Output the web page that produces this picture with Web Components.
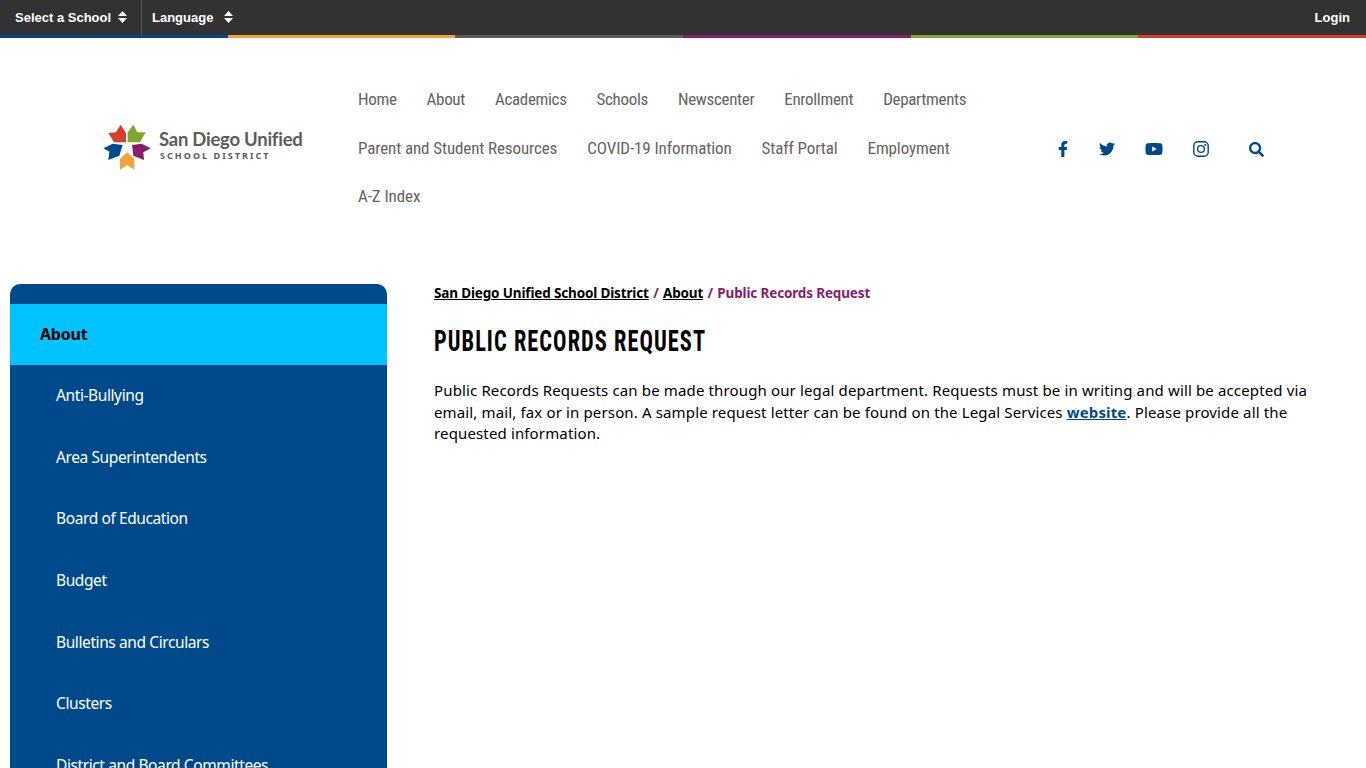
<!DOCTYPE html>
<html lang="en"><head><meta charset="utf-8"><title>Public Records Request</title>
<style>
html,body{margin:0;padding:0;height:768px;overflow:hidden;background:#fff}
body{font-family:"Noto Sans","Open Sans",sans-serif}
</style></head><body>
<sd-topbar></sd-topbar>
<sd-header></sd-header>
<sd-layout>
  <sd-sidenav slot="side"></sd-sidenav>
  <sd-article slot="main"></sd-article>
</sd-layout>
<script>
function def(name,html){
  customElements.define(name,class extends HTMLElement{
    constructor(){super();this.attachShadow({mode:'open'}).innerHTML=html;}
  });
}
const sort='<svg width="9" height="12" viewBox="0 0 9 12"><path fill="#fff" d="M4.5 0 9 5H0zM4.5 12 0 7h9z"/></svg>';
def('sd-topbar',`<style>
:host{display:block;font:700 13px/1 "Liberation Sans",Arial,sans-serif;color:#fff}
.bar{height:35px;background:#323232;display:flex;align-items:center;box-sizing:border-box}
.cell{height:35px;padding-bottom:1px;display:flex;align-items:center;box-sizing:border-box}
.school{width:142px;padding-left:15px;gap:7px;border-right:1px solid #555}
.lang{padding-left:10px;gap:11px}
.login{margin-left:auto;padding-right:16px}
span{display:block}
svg{display:block}
.stripe{display:grid;grid-template-columns:repeat(6,1fr);height:3px}
.stripe i{display:block}
</style>
<div class="bar">
<div class="cell school"><span>Select a School</span>${sort}</div>
<div class="cell lang"><span>Language</span>${sort}</div>
<div class="cell login"><span>Login</span></div>
</div>
<div class="stripe"><i style="background:#004a8b"></i><i style="background:#f5a13c"></i><i style="background:#5d5a58"></i><i style="background:#8a1c70"></i><i style="background:#7fa832"></i><i style="background:#d6402a"></i></div>`);

const navRows=[["Home","About","Academics","Schools","Newscenter","Enrollment","Departments"],["Parent and Student Resources","COVID-19 Information","Staff Portal","Employment"],["A-Z Index"]];
def('sd-header',`<style>
:host{display:block}
.wrap{height:246px;display:flex;align-items:center;box-sizing:border-box;padding-bottom:24px}
.logo{width:358px;box-sizing:border-box;padding-left:102px;display:flex;align-items:center;gap:7px;margin-top:-4px}
.logo svg{display:block;flex:none}
.lt{display:flex;flex-direction:column;color:#625a57;white-space:nowrap;margin-top:-6px}
.l1{font:700 18.5px/22px Lato,"Noto Sans",sans-serif;letter-spacing:-.25px}
.l2{font:700 9px/11px "Noto Sans",sans-serif;letter-spacing:2.05px;margin-left:1px}
nav{width:690px;font:400 17px/48.5px "Liberation Sans Narrow","Roboto Condensed","Roboto",sans-serif;color:#6a625e;letter-spacing:-.1px;margin-top:-2.5px}
.row{display:flex;gap:30px;white-space:nowrap}
.row:first-child{letter-spacing:-.32px}
.icons{display:flex;align-items:center;margin-top:-1px;height:20px;position:relative;flex:1}
.icons svg{display:block;fill:#004a8b}
.f{margin-left:10px}.t{margin-left:31px}.y{margin-left:30px}.i{margin-left:30px}.s{margin-left:40px;margin-top:2px}
</style>
<div class="wrap">
<div class="logo">
<svg width="50" height="48" viewBox="36 42 150 144" aria-hidden="true">
<path fill="#d6402a" d="M55 72l23-2 14-23 16 25v28H72z"/>
<path fill="#7fa832" d="M113 100V70l17-23 12 23h25l-17 30z"/>
<path fill="#004a8b" d="M40 118l28-14 30 4-10 32-33 13 3-25z"/>
<path fill="#8a1c70" d="M126 108l29-4 27 14-22 12 2 23-32-13z"/>
<path fill="#f5a13c" d="M90 150l22-20 21 20v32l-21-14-22 14z"/>
</svg>
<div class="lt"><span class="l1">San Diego Unified</span><span class="l2">SCHOOL DISTRICT</span></div>
</div>
<nav>${navRows.map(r=>`<div class="row">${r.map(t=>`<span>${t}</span>`).join('')}</div>`).join('')}</nav>
<div class="icons">
<svg class="f" width="10" height="16" viewBox="0 0 320 512"><path d="M279.14 288l14.22-92.66h-88.91v-60.13c0-25.35 12.42-50.06 52.24-50.06h40.42V6.26S260.43 0 225.36 0c-73.22 0-121.08 44.38-121.08 124.72v70.62H22.89V288h81.39v224h100.17V288z"/></svg>
<svg class="t" width="16" height="16" viewBox="0 0 512 512"><path d="M459.37 151.716c.325 4.548.325 9.097.325 13.645 0 138.72-105.583 298.558-298.558 298.558-59.452 0-114.68-17.219-161.137-47.106 8.447.974 16.568 1.299 25.34 1.299 49.055 0 94.213-16.568 130.274-44.832-46.132-.975-84.792-31.188-98.112-72.772 6.498.974 12.995 1.624 19.818 1.624 9.421 0 18.843-1.3 27.614-3.573-48.081-9.747-84.143-51.98-84.143-102.985v-1.299c13.969 7.797 30.214 12.67 47.431 13.319-28.264-18.843-46.781-51.005-46.781-87.391 0-19.492 5.197-37.36 14.294-52.954 51.655 63.675 129.3 105.258 216.365 109.807-1.624-7.797-2.599-15.918-2.599-24.04 0-57.828 46.782-104.934 104.934-104.934 30.213 0 57.502 12.67 76.67 33.137 23.715-4.548 46.456-13.32 66.599-25.34-7.798 24.366-24.366 44.833-46.132 57.827 21.117-2.273 41.584-8.122 60.426-16.243-14.292 20.791-32.161 39.308-52.628 54.253z"/></svg>
<svg class="y" width="18" height="16" viewBox="0 0 576 512"><path d="M549.655 124.083c-6.281-23.65-24.787-42.276-48.284-48.597C458.781 64 288 64 288 64S117.22 64 74.629 75.486c-23.497 6.322-42.003 24.947-48.284 48.597-11.412 42.867-11.412 132.305-11.412 132.305s0 89.438 11.412 132.305c6.281 23.65 24.787 41.5 48.284 47.821C117.22 448 288 448 288 448s170.78 0 213.371-11.486c23.497-6.321 42.003-24.171 48.284-47.821 11.412-42.867 11.412-132.305 11.412-132.305s0-89.438-11.412-132.305zm-317.51 213.508V175.185l142.739 81.205-142.739 81.201z"/></svg>
<svg class="i" width="16" height="16" viewBox="0 0 16 16"><rect x=".8" y=".8" width="14.4" height="14.4" rx="4" fill="none" stroke="#004a8b" stroke-width="1.4"/><circle cx="8" cy="8" r="3.4" fill="none" stroke="#004a8b" stroke-width="1.4"/><circle cx="12.2" cy="3.8" r="1"/></svg>
<svg class="s" width="15" height="15" viewBox="0 0 512 512"><path d="M505 442.7L405.3 343c-4.5-4.5-10.6-7-17-7H372c27.6-35.3 44-79.7 44-128C416 93.1 322.9 0 208 0S0 93.1 0 208s93.1 208 208 208c48.3 0 92.7-16.4 128-44v16.3c0 6.4 2.5 12.5 7 17l99.7 99.7c9.4 9.4 24.6 9.4 33.9 0l28.3-28.3c9.4-9.4 9.4-24.6.1-34zM208 336c-70.7 0-128-57.2-128-128 0-70.7 57.2-128 128-128 70.7 0 128 57.2 128 128 0 70.7-57.2 128-128 128z"/></svg>
</div>
</div>`);

def('sd-layout',`<style>
:host{display:grid;grid-template-columns:377px 1fr;column-gap:47px;padding:0 32px 0 10px}
</style><slot name="side"></slot><slot name="main"></slot>`);

const items=["Anti-Bullying","Area Superintendents","Board of Education","Budget","Bulletins and Circulars","Clusters","District and Board Committees"];
def('sd-sidenav',`<style>
:host{display:block;background:#004a8b;border-radius:10px 10px 0 0;padding-top:20px;font:400 15.5px/22px "Noto Sans",sans-serif;color:#fff}
a{display:flex;align-items:center;height:61.6px;padding:0 0 1px 46px;box-sizing:border-box;letter-spacing:-.4px;white-space:nowrap}
a.cur{height:61px;padding:0 0 2px 30px;background:#00c3ff;color:#000;font-weight:700;font-size:16px;letter-spacing:-.2px}
</style><a class="cur">About</a>${items.map(t=>`<a>${t}</a>`).join('')}`);

def('sd-article',`<style>
:host{display:block;font:400 15px/21.5px "Noto Sans",sans-serif;color:#000;letter-spacing:.14px}
.crumb{font-weight:700;font-size:13.5px;line-height:18px;color:#8a1c70;letter-spacing:-.15px}
.crumb a{color:#000;text-decoration:underline}
.crumb i{font-style:normal;margin:0 1px}
h1{margin:20px 0 0;font:700 30px/38px "Liberation Sans Narrow","Roboto Condensed","Roboto",sans-serif;text-transform:uppercase;letter-spacing:1.4px;white-space:nowrap;transform:scaleX(.745);transform-origin:left center}
p{margin:20px 0 0}
p a{color:#004a8b;font-weight:700;text-decoration:underline}
</style>
<div class="crumb"><a>San Diego Unified School District</a> <i>/</i> <a>About</a> <i>/</i> Public Records Request</div>
<h1>Public Records Request</h1>
<p>Public Records Requests can be made through our legal department. Requests must be in writing and will be accepted via email, mail, fax or in person. A sample request letter can be found on the Legal Services <a>website</a>. Please provide all the requested information.</p>`);
</script>
</body></html>
